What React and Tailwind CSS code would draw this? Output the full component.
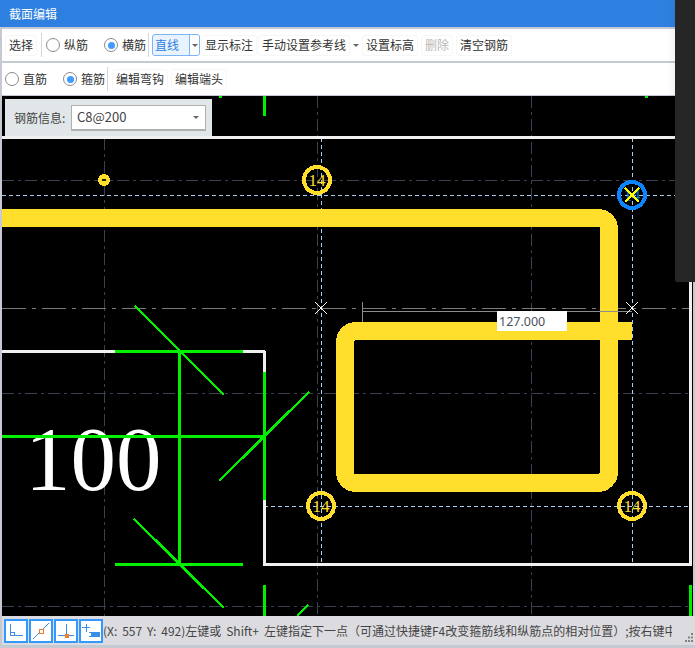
import React from 'react';

function Radio({ checked, label, className = '' }) {
  return (
    <label className={`flex items-center gap-[4px] ${className}`}>
      <span className="flex items-center justify-center w-[14px] h-[14px] rounded-full border border-[#8a8a8a] bg-white">
        {checked && <span className="w-[7px] h-[7px] rounded-full bg-[#3f9bff]" />}
      </span>
      <span className="text-[#333]">{label}</span>
    </label>
  );
}

function Btn({ children, disabled, className = '' }) {
  return (
    <button className={`h-[21px] px-[3px] flex items-center border border-[#f6f6f6] rounded-[3px] bg-white whitespace-nowrap ${disabled ? 'text-[#b8b8b8]' : 'text-[#333]'} ${className}`}>
      {children}
    </button>
  );
}

function Caret({ className = '', color = '#666' }) {
  return (
    <svg width="6" height="3" viewBox="0 0 6 3" className={className} aria-hidden="true">
      <path d="M0 0h6L3 3z" fill={color} />
    </svg>
  );
}

function Sep({ className = '' }) {
  return <span className={`w-px h-[24px] bg-[#d4d6da] ${className}`} />;
}

function Ring({ x, y, color = '#ffdf2b' }) {
  return (
    <g>
      <circle cx={x} cy={y} r="13" fill="none" stroke={color} strokeWidth="4" />
      <text x={x} y={y + 6} textAnchor="middle" fontSize="17" fill="#ffdf2b" fontFamily="'Liberation Serif', serif">14</text>
    </g>
  );
}

function Cross({ x, y }) {
  return <path d={`M${x - 6} ${y - 6}l12 12M${x + 6} ${y - 6}l-12 12`} stroke="#fff" strokeWidth="1" />;
}

function Canvas() {
  const dark = { stroke: '#3a4252', strokeWidth: 1, strokeDasharray: '12 4 3 4' };
  const blue = { stroke: '#a9cdf5', strokeWidth: 1, strokeDasharray: '4 3' };
  const green = '#00f000';
  const white = '#f0f0f0';
  return (
    <svg viewBox="2 96 691 520" className="block w-[691px] h-[520px]" shapeRendering="crispEdges">
      <rect x="2" y="96" width="691" height="520" fill="#000" />

      {/* grid lines */}
      <path d="M104.5 138V616M317.5 96V616M531.5 96V616" fill="none" {...dark} />
      <path d="M2 180.5H692M2 393.5H692M2 606.5H692" fill="none" {...dark} />
      <path d="M2 308.5H692" fill="none" stroke="#7c7c7c" strokeWidth="1" strokeDasharray="24 6 4 6" />
      <path d="M2 195.5H690M264 506.5H690M321.5 138V564M632.5 138V564" fill="none" {...blue} />

      {/* section outline */}
      <path d="M2 137.5H690" stroke={white} strokeWidth="3" />
      <path d="M690.5 136V565M2 351.5H265M264.5 351V565.5M264 564.5H692" fill="none" stroke={white} strokeWidth="3" />

      <text x="25" y="490" fontSize="91" fill="#fff" fontFamily="'Liberation Serif', serif">100</text>

      {/* green rebar */}
      <g fill="none" stroke={green} strokeWidth="3">
        <path d="M115 351.5H243M264.5 372V500M2 436.5H264M179.5 351V565M115 564.5H243" />
        <path d="M264.5 96V116M264.5 585V616M690.5 585V616M220 96V98M646 96V98" />
        <path d="M135 306L224 395M309 392L219 481M134 519L224 608M308 605L297 616" strokeWidth="2.5" />
      </g>

      {/* stirrup */}
      <path
        d="M2 218H598A11 11 0 0 1 609 229V472A11 11 0 0 1 598 483H356A11 11 0 0 1 345 472V342A11 11 0 0 1 356 331H632"
        fill="none"
        stroke="#ffdf2b"
        strokeWidth="18"
      />

      {/* dimension */}
      <path d="M362.5 302V322M362 311.5H632" stroke="#8c8c8c" strokeWidth="1" fill="none" />
      <rect x="497" y="311" width="70" height="20" fill="#fff" />
      <text x="499" y="326" fontSize="12.500" fill="#4a5160" fontFamily="'Noto Sans', sans-serif">127.000</text>
      <Cross x={321} y={308} />
      <Cross x={632} y={308} />

      {/* bars */}
      <circle cx="104" cy="180" r="6" fill="#ffdf2b" />
      <rect x="102" y="179" width="4" height="2" fill="#222" />
      <Ring x={317} y={180} />
      <Ring x={321} y={506} />
      <Ring x={632} y={506} />
      <circle cx="632" cy="195" r="13" fill="none" stroke="#0a84ff" strokeWidth="4" />
      <text x="632" y="201" textAnchor="middle" fontSize="17" fill="#0a6fd0" fontFamily="'Liberation Serif', serif">14</text>
      <path d="M625 188l14 14M639 188l-14 14" stroke="#ffff00" strokeWidth="2.500" />
    </svg>
  );
}

function SnapButton({ children }) {
  return (
    <button className="w-[24px] h-[24px] bg-white border-2 border-[#3399ff] flex items-center justify-center">
      <svg width="20" height="20" viewBox="0 0 20 20" fill="none" shapeRendering="crispEdges" aria-hidden="true">
        {children}
      </svg>
    </button>
  );
}

export default function App() {
  return (
    <div className="relative w-[695px] h-[648px] flex flex-col overflow-hidden bg-[#c5c9d1] text-[12px] font-['Noto_Sans_CJK_SC','Liberation_Sans',sans-serif]">
      <div className="h-[27px] shrink-0 bg-[#2e80e0] text-white flex items-center pl-[9px]">截面编辑</div>

      <div className="flex-1 flex flex-col min-h-0 px-[2px] pt-[2px] pb-[3px]">
        {/* first toolbar */}
        <div className="h-[32px] shrink-0 bg-white flex items-center pl-[3px]">
          <Btn>选择</Btn>
          <Sep className="ml-[4px]" />
          <Radio label="纵筋" className="ml-[4px]" />
          <Radio checked label="横筋" className="ml-[16px]" />
          <Sep className="ml-[2px]" />
          <div className="ml-[3px] w-[48px] h-[22px] flex items-stretch border border-[#7ab5f5] rounded-[3px] bg-[#e8f3ff] text-[#2f80e0]">
            <span className="flex-1 pl-[2px] flex items-center">直线</span>
            <span className="w-[10px] flex items-center justify-center border-l border-[#7ab5f5] bg-white rounded-r-[3px]">
              <Caret />
            </span>
          </div>
          <Btn className="ml-[1px]">显示标注</Btn>
          <Btn className="ml-[1px]">手动设置参考线</Btn>
          <Caret className="ml-[3px]" />
          <Btn className="ml-[3px]">设置标高</Btn>
          <Btn disabled className="ml-[3px]">删除</Btn>
          <Btn className="ml-[3px]">清空钢筋</Btn>
        </div>

        {/* second toolbar */}
        <div className="h-[32px] mt-[2px] shrink-0 bg-white flex items-center pl-[3px]">
          <Radio label="直筋" />
          <Radio checked label="箍筋" className="ml-[16px]" />
          <Sep className="ml-[2px]" />
          <Btn className="ml-[4px]">编辑弯钩</Btn>
          <Btn className="ml-[3px]">编辑端头</Btn>
        </div>

        {/* drawing area */}
        <div className="relative mt-px h-[520px] shrink-0 w-[691px]">
          <Canvas />
          <div className="absolute left-[3px] top-[3px] w-[207px] h-[37px] bg-[#e1e7e9] flex items-center pl-[9px]">
            <span className="text-[#444] w-[57px]">钢筋信息:</span>
            <div className="w-[135px] h-[26px] bg-white border border-[#b0b0b0] border-b-2 flex items-center justify-between pl-[5px] pr-[6px] text-[13px] text-[#444]">
              <span>C8@200</span>
              <Caret />
            </div>
          </div>
        </div>

        {/* status bar */}
        <div className="h-[29px] shrink-0 -mr-[2px] bg-[#dcdce0] flex items-center pl-[2px] gap-px">
          <SnapButton>
            <path d="M4.500 3V14.500H17M4.500 11H8V14.500" stroke="#3a8ee6" />
          </SnapButton>
          <SnapButton>
            <path d="M2 18L18 2" stroke="#3a8ee6" shapeRendering="auto" />
            <rect x="8" y="8" width="4" height="4" fill="#fff" stroke="#f08030" />
          </SnapButton>
          <SnapButton>
            <path d="M10.500 3V14M2 14.500H18" stroke="#3a8ee6" />
            <rect x="8.500" y="12.500" width="4" height="4" fill="#f08030" />
          </SnapButton>
          <SnapButton>
            <path d="M1 6.500H9M5 2.500V10.500" stroke="#3a8ee6" />
            <rect x="8" y="11" width="11" height="5" fill="#3a8ee6" />
            <rect x="8" y="12" width="2" height="3" fill="#fff" />
          </SnapButton>
          <div className="w-[569px] overflow-hidden whitespace-nowrap text-[#444] -ml-px [word-spacing:2.2px]">
            (X: 557 Y: 492)左键或 Shift+ 左键指定下一点（可通过快捷键F4改变箍筋线和纵筋点的相对位置）;按右键中
          </div>
          <svg width="10" height="10" viewBox="0 0 10 10" className="ml-auto self-end mb-[2px] mr-px" aria-hidden="true">
            <path d="M7 0h2v2H7zM4 3.500h2v2H4zM7 3.500h2v2H7zM1 7h2v2H1zM4 7h2v2H4zM7 7h2v2H7z" fill="#808080" />
          </svg>
        </div>
      </div>

      {/* neighbouring window showing at the right edge */}
      <div className="absolute left-[675px] top-0 w-[20px] h-[282px] bg-[#262626] rounded-bl-[2px] shadow-[-3px_0_6px_rgba(0,0,0,0.06)]" />
    </div>
  );
}
